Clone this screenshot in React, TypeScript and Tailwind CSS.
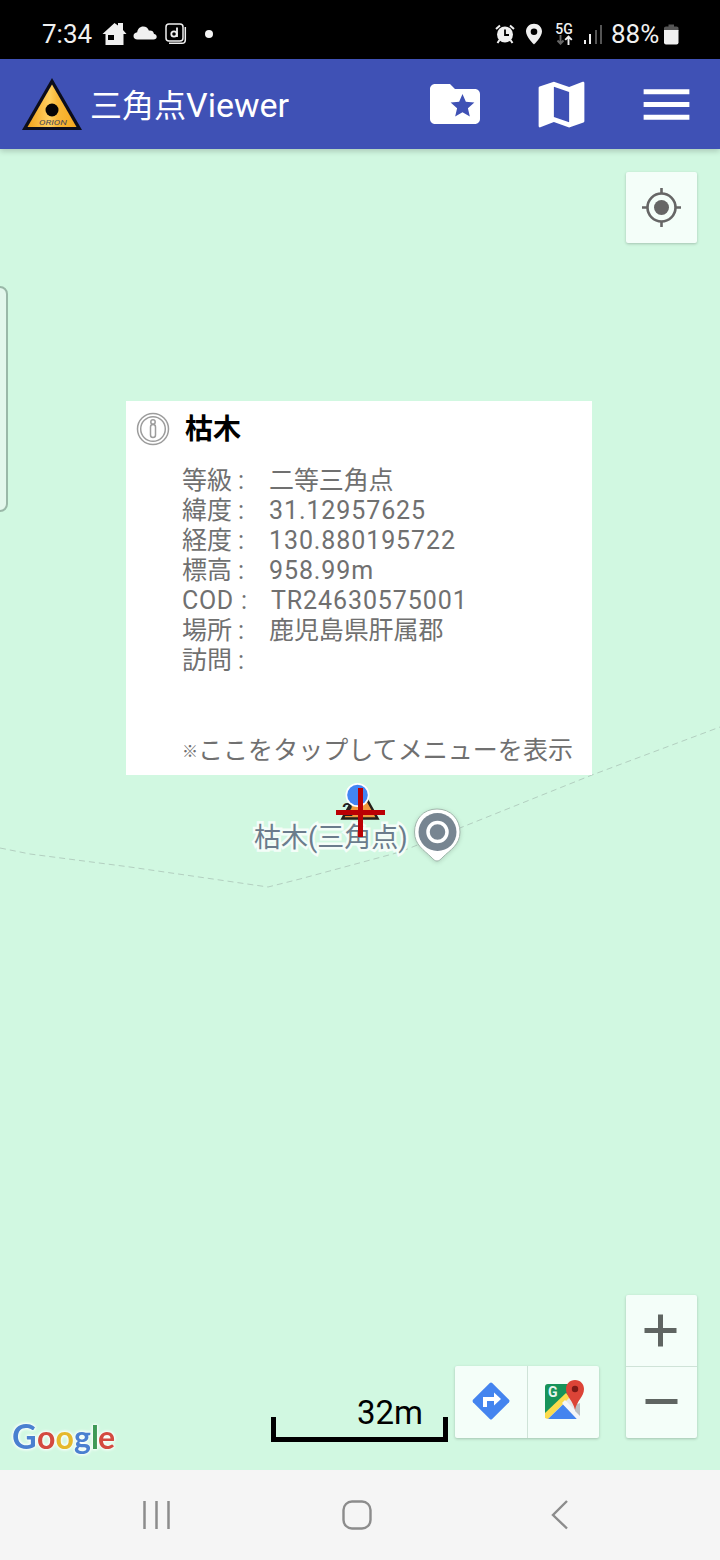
import { MdFolderSpecial, MdMap, MdMenu } from 'react-icons/md';

const details = [
  { label: '等級', value: '二等三角点', cjk: true },
  { label: '緯度', value: '31.12957625' },
  { label: '経度', value: '130.880195722' },
  { label: '標高', value: '958.99m' },
  { label: 'COD', value: 'TR24630575001' },
  { label: '場所', value: '鹿児島県肝属郡', cjk: true },
  { label: '訪問', value: '' },
];

function StatusBar() {
  return (
    <div className="flex h-[59px] items-center justify-between bg-black pt-[9px] pr-[41px] pl-[42px] text-[#f0f0f0]">
      <div className="flex items-center">
        <span className="w-[60px] text-[26px] leading-none">7:34</span>
        <svg width="25" height="24" viewBox="0 0 25 24" fill="#f0f0f0">
          <path d="M12.5 1 L16 3.5 V1 H21 V8 L24.5 12 H21.5 V23 H3.5 V12 H0.5 Z" />
          <rect x="6" y="13" width="6" height="5" fill="#000" />
        </svg>
        <svg className="-mt-[2px] ml-[6px]" width="24" height="14" viewBox="0 0 24 14" fill="#f0f0f0">
          <path d="M4.500 13.500 C2 13.500 .5 12 .5 10 C.5 8 2 6.500 4.200 6.300 C4.600 2.800 7 .5 10.200 .5 C13 .5 15 2 16 4.700 C18.600 4.300 20.600 5.500 21 7.900 C22.800 8.200 23.700 9.300 23.700 10.700 C23.700 12.400 22.400 13.500 20.500 13.500 Z" />
        </svg>
        <svg className="ml-[8px]" width="22" height="22" viewBox="0 0 22 22" fill="none" stroke="#f0f0f0" strokeWidth="1.5">
          <rect x="1" y="1" width="17" height="17" rx="3" />
          <path d="M4 20.300 H17 Q20.300 20.300 20.300 17 V4" />
          <circle cx="9" cy="11" r="2.700" strokeWidth="1.800" />
          <path d="M12 4.500 V14" strokeWidth="1.800" />
        </svg>
        <div className="ml-[18px] h-[8px] w-[8px] rounded-full bg-[#f5f5f5]" />
      </div>
      <div className="flex items-center">
        <svg width="20" height="20" viewBox="0 0 20 20">
          <circle cx="10" cy="10.500" r="8" fill="#f0f0f0" />
          <path d="M1 5 L5 1.500 M19 5 L15 1.500 M4.500 16 L2.500 19 M15.500 16 L17.500 19" stroke="#f0f0f0" strokeWidth="2" />
          <path d="M10 5.500 V11 H14" stroke="#000" strokeWidth="1.800" fill="none" />
        </svg>
        <svg className="ml-[10px]" width="18" height="22" viewBox="0 0 18 22">
          <path fillRule="evenodd" fill="#f0f0f0" d="M9 .8 C4.400 .8 1 4.200 1 8.600 C1 14 9 21.500 9 21.500 S17 14 17 8.600 C17 4.200 13.600 .8 9 .8 Z M9 5.400 A3.300 3.300 0 1 1 9 12 A3.300 3.300 0 1 1 9 5.400 Z" />
        </svg>
        <div className="ml-[12px] flex w-[18px] flex-col items-center">
          <span className="text-[14px] leading-[12px] font-medium">5G</span>
          <svg width="17" height="10" viewBox="0 0 17 10" fill="none" strokeWidth="1.900">
            <path d="M4.500 0 V8.500 M1.500 5.500 L4.500 8.700 L7.500 5.500" stroke="#666" />
            <path d="M12.500 10 V1.500 M9.200 4.800 L12.500 1.500 L15.800 4.800" stroke="#f0f0f0" />
          </svg>
        </div>
        <div className="ml-[11px] flex h-[19px] w-[18px] items-end justify-between">
          <div className="h-[4px] w-[2px] bg-[#f0f0f0]" />
          <div className="h-[10px] w-[2px] bg-[#f0f0f0]" />
          <div className="h-[14px] w-[2px] bg-[#555]" />
          <div className="h-[19px] w-[2px] bg-[#555]" />
        </div>
        <span className="ml-[9px] w-[51px] text-[26px] leading-none">88%</span>
        <svg className="ml-[2px]" width="15" height="21" viewBox="0 0 15 21">
          <path d="M0 7 V4 Q0 2.500 2 2.500 H4.500 V0.500 H10 V2.500 H12.500 Q14.500 2.500 14.500 4 V7 Z" fill="#555" />
          <path d="M0 6 H14.500 V18.500 Q14.500 20.500 12.500 20.500 H2 Q0 20.500 0 18.500 Z" fill="#f0f0f0" />
        </svg>
      </div>
    </div>
  );
}

function AppBar() {
  return (
    <header className="relative z-10 flex h-[90px] items-center justify-between bg-[#3f51b5] pr-[23px] pl-[22px] text-white shadow-[0_2px_6px_rgba(0,0,0,0.2)]">
      <div className="flex items-center">
        <svg width="60" height="54" viewBox="0 0 60 54">
          <defs>
            <linearGradient id="sign" x1="0" x2="1">
              <stop offset="0" stopColor="#f2a21c" />
              <stop offset="0.450" stopColor="#ffd060" />
              <stop offset="0.600" stopColor="#f9b93a" />
              <stop offset="1" stopColor="#f5a81f" />
            </linearGradient>
          </defs>
          <path d="M30 1 L60 53 H0 Z" fill="#0c0d1c" />
          <path d="M30 7.500 L54.500 50 H5.500 Z" fill="url(#sign)" />
          <circle cx="30" cy="33" r="6.500" fill="#050505" />
          <text x="17" y="48" fontSize="6.500" fontStyle="italic" fill="#4a4a55" textLength="28" lengthAdjust="spacingAndGlyphs">ORION</text>
        </svg>
        <h1 className="mt-[2px] ml-[8px] flex items-baseline text-[34px] leading-[50px]">
          <span className="text-[32px]">三角点</span>Viewer
        </h1>
      </div>
      <div className="flex items-center">
        <MdFolderSpecial size={60} />
        <MdMap className="ml-[46px]" size={61} />
        <MdMenu className="ml-[44px]" size={61} />
      </div>
    </header>
  );
}

function InfoWindow() {
  return (
    <div className="absolute top-[252px] left-[126px] h-[374px] w-[466px] bg-white pt-[11px] pl-[10px]">
      <div className="flex h-[36px] items-start">
        <svg width="34" height="34" viewBox="0 0 34 34" fill="none" stroke="#9c9c9c" strokeWidth="1.500">
          <circle cx="17" cy="17" r="15.500" />
          <circle cx="17" cy="17" r="12.300" />
          <circle cx="17" cy="10" r="2.200" />
          <rect x="14.500" y="12.500" width="5" height="13" rx="2.500" />
        </svg>
        <h2 className="mt-px ml-[15px] text-[28px] leading-[34px] font-bold text-black">枯木</h2>
      </div>
      <div className="mt-[18px] ml-[46px] text-[25px] leading-[30px] text-[#707070]">
        {details.map((d) => (
          <div key={d.label} className="flex h-[30px] whitespace-nowrap">
            <span className={d.label === 'COD' ? 'w-[56px] tracking-[0.7px]' : 'w-[55px]'}>{d.label}</span>
            <span className={d.label === 'COD' ? 'w-[33px] pl-[3px]' : 'w-[32px] pl-[1px]'}>:</span>
            <span className={d.cjk ? 'tracking-[-0.1px]' : 'tracking-[0.9px]'}>{d.value}</span>
          </div>
        ))}
        <p className="mt-[60px] whitespace-nowrap">
          <span className="inline-block w-[16px] align-[2px] text-[16px] leading-none font-bold">※</span>
          <span className="tracking-[0.05px]">ここをタップしてメニューを表示</span>
        </p>
      </div>
    </div>
  );
}

function MapMarkers() {
  return (
    <>
      <div className="absolute top-[670px] left-[254px] text-[27px] leading-[38px] whitespace-nowrap text-[#6b7c8c] [-webkit-text-stroke:5px_#f4fdf8] [paint-order:stroke_fill]">
        枯木(三角点)
      </div>
      <svg className="absolute top-[626px] left-[330px]" width="136" height="94" viewBox="0 0 136 94">
        <path d="M30 12 L47.500 43.500 H12.500 Z" fill="#f09a3e" stroke="#26201a" strokeWidth="2.500" />
        <text x="12" y="41" fontSize="19" fontWeight="500" fill="#222">2</text>
        <circle cx="27.500" cy="20" r="12" fill="#fff" />
        <circle cx="27.500" cy="20" r="10.300" fill="#4285f4" />
        <path d="M30.500 13 V62 M6 37.500 H55" stroke="#bb0004" strokeWidth="5" />
        <path d="M107 34 C93 34 84.500 44.500 84.500 57 C84.500 70 94 75 101 82 C104 85 105 86 107 86 C109 86 110 85 113 82 C120 75 130 70 130 57 C130 44.500 121 34 107 34 Z" fill="#fff" stroke="#9fb5aa" strokeWidth="1" className="drop-shadow-sm" />
        <circle cx="107.500" cy="57" r="19" fill="#778591" />
        <circle cx="107.500" cy="57" r="9.500" fill="none" stroke="#fff" strokeWidth="3.500" />
      </svg>
    </>
  );
}

function MapControls() {
  return (
    <>
      <button className="absolute top-[23px] left-[626px] flex h-[71px] w-[71px] items-center justify-center rounded-[2px] bg-[#f4fef9] shadow-[0_1px_3px_rgba(0,0,0,0.22)]">
        <svg width="40" height="40" viewBox="0 0 40 40" fill="none" stroke="#666" strokeWidth="2.600">
          <circle cx="19.500" cy="19.500" r="14" />
          <circle cx="19.500" cy="19.500" r="7.500" fill="#666" stroke="none" />
          <path d="M19.500 0 V5.500 M19.500 33.500 V39 M0 19.500 H5.500 M33.500 19.500 H39" />
        </svg>
      </button>
      <div className="absolute top-[1146px] left-[626px] flex w-[71px] flex-col divide-y divide-[#cfe3d8] rounded-[2px] bg-[#f4fef9] shadow-[0_1px_3px_rgba(0,0,0,0.22)]">
        <button className="flex h-[72px] items-center justify-center pr-px">
          <svg width="34" height="34" viewBox="0 0 34 34">
            <path d="M16.500 0.500 V32.500 M0.500 16.500 H32.500" stroke="#5f6562" strokeWidth="5" />
          </svg>
        </button>
        <button className="flex h-[71px] items-center justify-center pb-px">
          <svg width="34" height="34" viewBox="0 0 34 34">
            <path d="M0.500 16.500 H32.500" stroke="#5f6562" strokeWidth="5" />
          </svg>
        </button>
      </div>
      <div className="absolute top-[1217px] left-[455px] flex h-[72px] w-[144px] divide-x divide-[#cfe3d8] rounded-[2px] bg-[#f4fef9] shadow-[0_1px_3px_rgba(0,0,0,0.22)]">
        <button className="flex w-[73px] items-center justify-center pr-px pb-[2px]">
          <svg width="38" height="38" viewBox="0 0 38 38">
            <path d="M17.800 1 Q19 0 20.200 1 L37 17.800 Q38 19 37 20.200 L20.200 37 Q19 38 17.800 37 L1 20.200 Q0 19 1 17.800 Z" fill="#4484ef" />
            <path d="M13 25 V17 H23" fill="none" stroke="#fff" strokeWidth="4" />
            <path d="M22 10.500 L29 17 L22 23.500 Z" fill="#fff" />
          </svg>
        </button>
        <button className="flex w-[71px] items-center justify-center pb-[4px]">
          <svg width="42" height="42" viewBox="0 0 42 42">
            <rect x="2" y="5" width="33" height="35" rx="3" fill="#e5e7e8" />
            <path d="M2 8 Q2 5 5 5 H27 V15 L2 39 Z" fill="#17935a" />
            <path d="M2 39 V34 L23 14 L27 18 L5 40 Z" fill="#fbdb4d" />
            <path d="M5 40 L20 25.500 L34 40 Z" fill="#4484ef" />
            <path d="M19 24 L22 21 L37 36 V40 H34 Z" fill="#f4f6f8" />
            <path d="M32 26 L37 24 V37 L32 32 Z" fill="#bcbfc2" />
            <text x="5" y="17.500" fontSize="14" fontWeight="700" fill="#e8f5ee">G</text>
            <path d="M32 1 C26.500 1 23 5 23 10 C23 18 30 21 32 31 C34 21 41 18 41 10 C41 5 37.500 1 32 1 Z" fill="#dc4437" />
            <circle cx="32" cy="10" r="3.200" fill="#7c1a16" />
          </svg>
        </button>
      </div>
    </>
  );
}

function MapView() {
  return (
    <main className="relative h-[1321px] overflow-hidden bg-[#d1f8e1]">
      {/* trail */}
      <svg className="absolute inset-0" width="720" height="1321" viewBox="0 0 720 1321" fill="none">
        <path d="M0 699 L30 705 L130 718 L268 738 L300 730 L400 703 L592 626 L720 578" stroke="#b3cfc0" strokeWidth="1" strokeDasharray="6 4" />
      </svg>

      {/* edge panel handle */}
      <div className="absolute top-[137px] -left-[10px] h-[226px] w-[18px] rounded-[8px] border-2 border-[#9ab8a8] bg-[#e3f7ec]" />

      <InfoWindow />
      <MapMarkers />
      <MapControls />

      {/* scale */}
      <div className="absolute top-[1242px] left-[271px] w-[177px]">
        <div className="pr-[25px] text-right text-[33px] leading-[44px] text-black">32m</div>
        <div className="-mt-[18px] h-[25px] border-x-[5px] border-b-[5px] border-black" />
      </div>

      {/* Google */}
      <svg
        className="absolute top-[1258px] left-0 [filter:drop-shadow(0_0_1.5px_#fff)_drop-shadow(0_0_1.5px_#fff)]"
        width="130"
        height="60"
        viewBox="0 0 130 60"
      >
        <text y="41.500" fontSize="32" fontFamily="Lato, sans-serif" fontWeight="700">
          <tspan x="12" fill="#4a80d0" fontSize="34">G</tspan>
          <tspan x="37" fill="#d34a40">o</tspan>
          <tspan x="55.500" fill="#e5b92c">o</tspan>
          <tspan x="74" fill="#4a80d0">g</tspan>
          <tspan x="91" fill="#3f9a57">l</tspan>
          <tspan x="98" fill="#d34a40">e</tspan>
        </text>
      </svg>
    </main>
  );
}

function NavBar() {
  return (
    <nav className="flex h-[90px] items-center bg-[#f5f5f5] pl-[142px]">
      <svg width="30" height="30" viewBox="0 0 30 30" stroke="#8c8c8c" strokeWidth="2.500">
        <path d="M2.500 1 V29 M14.500 1 V29 M26.500 1 V29" />
      </svg>
      <svg className="ml-[170px]" width="30" height="30" viewBox="0 0 30 30" fill="none" stroke="#8c8c8c" strokeWidth="2.400">
        <rect x="1.500" y="1.500" width="27" height="27" rx="8.500" />
      </svg>
      <svg className="ml-[178px]" width="20" height="30" viewBox="0 0 20 30" fill="none" stroke="#8c8c8c" strokeWidth="2.400">
        <path d="M17 1 L3 15 L17 28.500" />
      </svg>
    </nav>
  );
}

export default function App() {
  return (
    <div className="w-[720px] font-['Roboto','Noto_Sans_CJK_JP',sans-serif]">
      <StatusBar />
      <AppBar />
      <MapView />
      <NavBar />
    </div>
  );
}
